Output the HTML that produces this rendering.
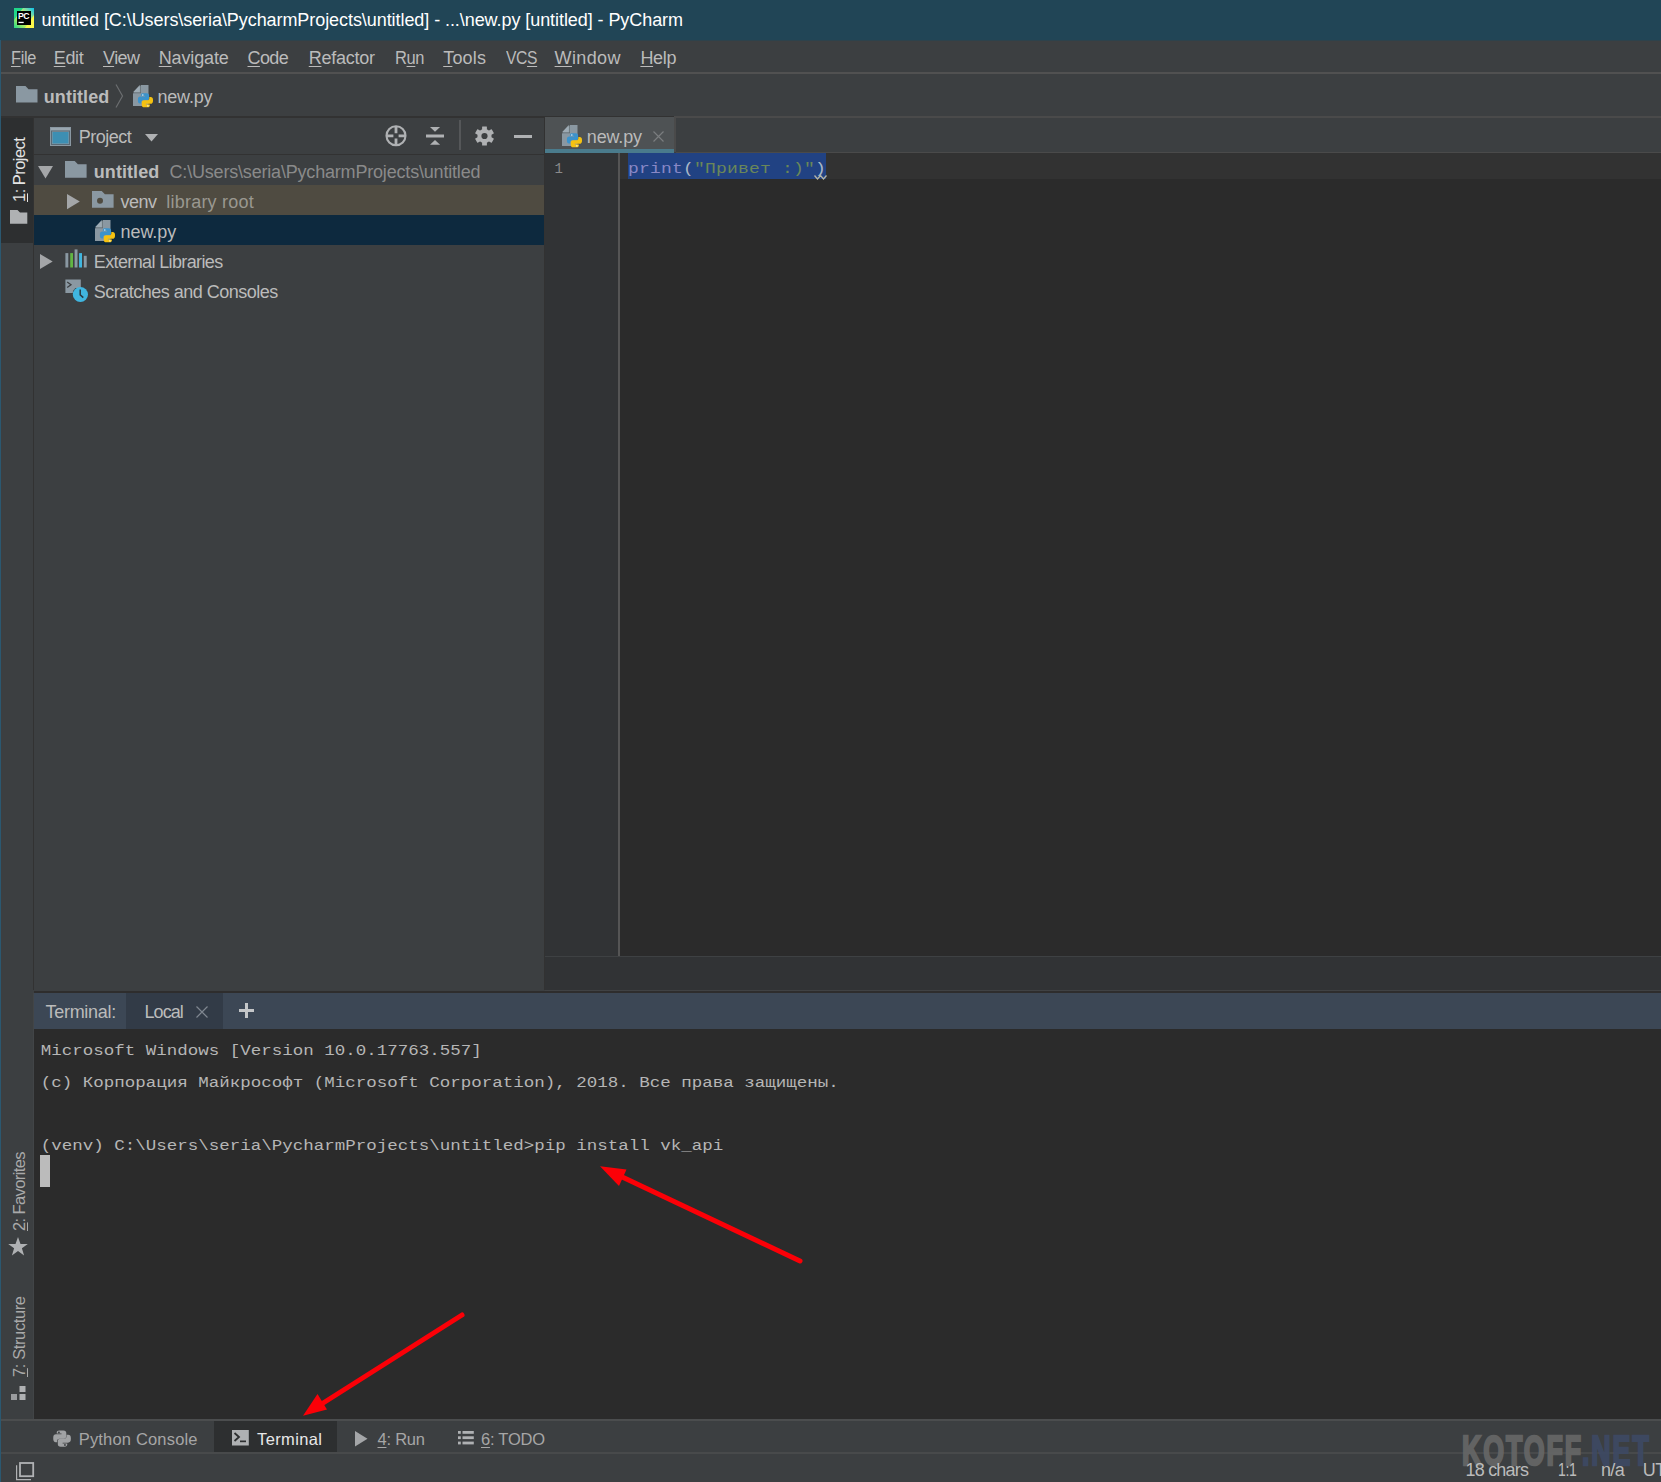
<!DOCTYPE html>
<html lang="en"><head><meta charset="utf-8"><title>untitled - PyCharm</title>
<style>
html,body{margin:0;padding:0}
body{width:1661px;height:1482px;position:relative;overflow:hidden;background:#3c3f41;font-family:"Liberation Sans",sans-serif;}
.b{position:absolute}
.t{position:absolute;white-space:pre;line-height:1;transform-origin:0 0;z-index:2}
.t u{text-decoration:underline;text-decoration-thickness:1px;text-underline-offset:2px}
.m{font-family:"Liberation Mono",monospace}
svg{position:absolute;overflow:visible}
</style></head>
<body>
<div class="b" style="left:0px;top:0px;width:1661px;height:40px;background:#214556"></div>
<div class="b" style="left:0px;top:40px;width:1661px;height:1px;background:#2e424b"></div>
<div class="b" style="left:0px;top:40px;width:1px;height:1442px;background:#2b5870"></div>
<div class="b" style="left:1px;top:72px;width:1660px;height:2px;background:#515151"></div>
<div class="b" style="left:1px;top:116px;width:544px;height:2px;background:#323232"></div>
<div class="b" style="left:674px;top:116px;width:987px;height:2px;background:#4a4a4a"></div>
<div class="b" style="left:1px;top:118px;width:32px;height:125px;background:#2d2f30"></div>
<div class="b" style="left:33px;top:118px;width:1px;height:872px;background:#323232"></div>
<div class="b" style="left:33px;top:993px;width:1px;height:426px;background:#424547"></div>
<div class="b" style="left:34px;top:154px;width:510px;height:1px;background:#323232"></div>
<div class="b" style="left:34px;top:185px;width:510px;height:30px;background:#4f4b41"></div>
<div class="b" style="left:34px;top:215px;width:510px;height:30px;background:#0d293e"></div>
<div class="b" style="left:544px;top:118px;width:1px;height:872px;background:#323232"></div>
<div class="b" style="left:545px;top:117px;width:129px;height:36px;background:#4e5254"></div>
<div class="b" style="left:545px;top:116px;width:129px;height:1px;background:#323232"></div>
<div class="b" style="left:545px;top:149px;width:129px;height:4px;background:#4a7b8c"></div>
<div class="b" style="left:674px;top:118px;width:2px;height:34px;background:#4a4a4a"></div>
<div class="b" style="left:676px;top:152px;width:985px;height:1px;background:#4a4a4a"></div>
<div class="b" style="left:545px;top:153px;width:73px;height:803px;background:#313335"></div>
<div class="b" style="left:618px;top:153px;width:2px;height:803px;background:#555555"></div>
<div class="b" style="left:620px;top:153px;width:1041px;height:803px;background:#2b2b2b"></div>
<div class="b" style="left:620px;top:153px;width:1041px;height:26px;background:#323232"></div>
<div class="b" style="left:628px;top:153px;width:198px;height:26px;background:#214283"></div>
<div class="b" style="left:545px;top:956px;width:1116px;height:34px;background:#313335"></div>
<div class="b" style="left:545px;top:956px;width:1116px;height:1px;background:#3e4143"></div>
<div class="b" style="left:545px;top:990px;width:1116px;height:1px;background:#404244"></div>
<div class="b" style="left:34px;top:991px;width:1627px;height:2px;background:#2e2d2d"></div>
<div class="b" style="left:34px;top:993px;width:1627px;height:36px;background:#3c4755"></div>
<div class="b" style="left:126px;top:993px;width:97px;height:36px;background:#323b47"></div>
<div class="b" style="left:34px;top:1029px;width:1627px;height:390px;background:#2b2b2b"></div>
<div class="b" style="left:40px;top:1155px;width:10px;height:32px;background:#bbbbbb"></div>
<div class="b" style="left:1px;top:1419px;width:1660px;height:2px;background:#4b4d4e"></div>
<div class="b" style="left:214px;top:1421px;width:123px;height:31px;background:#2d2f30"></div>
<div class="b" style="left:1px;top:1452px;width:1660px;height:2px;background:#484a4b"></div>
<span class="t" style="left:41.50px;top:10.76px;font-size:18px;color:#ffffff;letter-spacing:-0.069px">untitled [C:\Users\seria\PycharmProjects\untitled] - ...\new.py [untitled] - PyCharm</span>
<span class="t" style="left:10.50px;top:48.76px;font-size:18px;color:#bbbbbb;letter-spacing:-0.400px;transform:scaleX(0.9078)"><u>F</u>ile</span>
<span class="t" style="left:53.75px;top:48.76px;font-size:18px;color:#bbbbbb;letter-spacing:-0.344px"><u>E</u>dit</span>
<span class="t" style="left:103.00px;top:48.76px;font-size:18px;color:#bbbbbb;letter-spacing:-0.568px"><u>V</u>iew</span>
<span class="t" style="left:158.75px;top:48.76px;font-size:18px;color:#bbbbbb;letter-spacing:-0.150px"><u>N</u>avigate</span>
<span class="t" style="left:247.50px;top:48.76px;font-size:18px;color:#bbbbbb;letter-spacing:-0.594px"><u>C</u>ode</span>
<span class="t" style="left:308.75px;top:48.76px;font-size:18px;color:#bbbbbb;letter-spacing:-0.254px"><u>R</u>efactor</span>
<span class="t" style="left:394.80px;top:48.76px;font-size:18px;color:#bbbbbb;letter-spacing:-0.400px;transform:scaleX(0.9153)">R<u>u</u>n</span>
<span class="t" style="left:443.20px;top:48.76px;font-size:18px;color:#bbbbbb;letter-spacing:0.192px"><u>T</u>ools</span>
<span class="t" style="left:505.50px;top:48.76px;font-size:18px;color:#bbbbbb;letter-spacing:-0.400px;transform:scaleX(0.8698)">VC<u>S</u></span>
<span class="t" style="left:554.60px;top:48.76px;font-size:18px;color:#bbbbbb;letter-spacing:0.374px"><u>W</u>indow</span>
<span class="t" style="left:640.40px;top:48.76px;font-size:18px;color:#bbbbbb;letter-spacing:-0.310px"><u>H</u>elp</span>
<span class="t" style="left:43.75px;top:87.76px;font-size:18px;color:#bbbbbb;letter-spacing:0.071px;font-weight:700">untitled</span>
<span class="t" style="left:157.50px;top:87.76px;font-size:18px;color:#bbbbbb;letter-spacing:-0.209px">new.py</span>
<span class="t" style="left:78.75px;top:127.76px;font-size:18px;color:#bbbbbb;letter-spacing:-0.505px">Project</span>
<span class="t" style="left:93.75px;top:162.76px;font-size:18px;color:#bbbbbb;letter-spacing:0.071px;font-weight:700">untitled</span>
<span class="t" style="left:169.50px;top:162.76px;font-size:18px;color:#8a8a8a;letter-spacing:-0.187px">C:\Users\seria\PycharmProjects\untitled</span>
<span class="t" style="left:120.50px;top:192.76px;font-size:18px;color:#bbbbbb;letter-spacing:-0.510px">venv</span>
<span class="t" style="left:166.25px;top:192.76px;font-size:18px;color:#9a9890;letter-spacing:0.224px">library root</span>
<span class="t" style="left:120.50px;top:222.76px;font-size:18px;color:#bbbbbb;letter-spacing:-0.059px">new.py</span>
<span class="t" style="left:93.75px;top:252.76px;font-size:18px;color:#bbbbbb;letter-spacing:-0.621px">External Libraries</span>
<span class="t" style="left:93.75px;top:282.76px;font-size:18px;color:#bbbbbb;letter-spacing:-0.505px">Scratches and Consoles</span>
<span class="t" style="left:586.80px;top:127.76px;font-size:18px;color:#bbbbbb;letter-spacing:-0.169px">new.py</span>
<span class="t m" style="left:554.50px;top:161.67px;font-size:14px;color:#8a8a8a;letter-spacing:0.000px">1</span>
<span class="t" style="left:45.50px;top:1002.76px;font-size:18px;color:#bbbbbb;letter-spacing:-0.285px">Terminal:</span>
<span class="t" style="left:144.50px;top:1002.76px;font-size:18px;color:#bbbbbb;letter-spacing:-0.945px">Local</span>
<span class="t" style="left:78.75px;top:1431.03px;font-size:16.5px;color:#a6a6a6;letter-spacing:0.173px">Python Console</span>
<span class="t" style="left:257.00px;top:1431.03px;font-size:16.5px;color:#e8e8e8;letter-spacing:0.377px">Terminal</span>
<span class="t" style="left:377.50px;top:1431.03px;font-size:16.5px;color:#a6a6a6;letter-spacing:-0.225px"><u>4</u>: Run</span>
<span class="t" style="left:481.00px;top:1431.03px;font-size:16.5px;color:#a6a6a6;letter-spacing:-0.237px"><u>6</u>: TODO</span>
<span class="t" style="left:1465.50px;top:1461.36px;font-size:18px;color:#bbbbbb;letter-spacing:-0.792px">18 chars</span>
<span class="t" style="left:1557.70px;top:1461.36px;font-size:18px;color:#bbbbbb;letter-spacing:-0.400px;transform:scaleX(0.7800)">1:1</span>
<span class="t" style="left:1601.00px;top:1461.36px;font-size:18px;color:#bbbbbb;letter-spacing:-0.666px">n/a</span>
<span class="t" style="left:1642.80px;top:1461.36px;font-size:18px;color:#bbbbbb;letter-spacing:-0.600px">UTF-8</span>
<span class="t" style="left:11.33px;top:201.60px;font-size:16.5px;color:#e4e4e4;letter-spacing:-0.545px;transform:rotate(-90deg)"><u>1</u>: Project</span>
<span class="t" style="left:11.33px;top:1230.60px;font-size:16.5px;color:#a9a9a9;letter-spacing:-0.600px;transform:rotate(-90deg)"><u>2</u>: Favorites</span>
<span class="t" style="left:11.33px;top:1377.40px;font-size:16.5px;color:#a9a9a9;letter-spacing:-0.391px;transform:rotate(-90deg)"><u>7</u>: Structure</span>
<!-- code line -->
<span class="t m" style="left:628px;top:158.7px;font-size:18px;letter-spacing:0.2px;color:#a9b7c6;transform:scaleY(.85);transform-origin:0 13.800px"><span style="color:#8888c6">print</span>(<span style="color:#6a8759">"Привет :)"</span>)</span>
<svg style="left:814px;top:173.500px" width="13" height="6" viewBox="0 0 13 6"><path d="M0.5 1.5 L3.5 5 L6.5 1.5 L9.5 5 L12.5 1.5" fill="none" stroke="#b4b4a6" stroke-width="1.300"/></svg>
<!-- terminal text -->
<span class="t m" style="left:40.700px;top:1041.6px;font-size:17.5px;color:#b6b6b6;transform:scaleY(.85);transform-origin:0 13.400px">Microsoft Windows [Version 10.0.17763.557]</span>
<span class="t m" style="left:40.700px;top:1073.6px;font-size:17.5px;color:#b6b6b6;transform:scaleY(.85);transform-origin:0 13.400px">(c) Корпорация Майкрософт (Microsoft Corporation), 2018. Все права защищены.</span>
<span class="t m" style="left:40.700px;top:1136.9px;font-size:17.5px;color:#b6b6b6;transform:scaleY(.85);transform-origin:0 13.400px">(venv) C:\Users\seria\PycharmProjects\untitled&gt;pip install vk_api</span>

<!-- PyCharm logo -->
<svg style="left:14px;top:8px" width="20" height="20" viewBox="0 0 20 20">
<defs><linearGradient id="pcg" x1="0" y1="1" x2="1" y2="0"><stop offset="0" stop-color="#21d789"/><stop offset="0.5" stop-color="#fcf84a"/><stop offset="1" stop-color="#07c3f2"/></linearGradient></defs>
<rect width="20" height="20" fill="url(#pcg)"/><path d="M0 0H9L0 12Z" fill="#21d789"/><path d="M20 20H11L20 7Z" fill="#fcf84a"/>
<rect x="3" y="3" width="14" height="14" fill="#000"/>
<text x="4" y="11.300" font-family="Liberation Sans, sans-serif" font-weight="700" font-size="9.200" fill="#fff" letter-spacing="-0.6" textLength="11" lengthAdjust="spacingAndGlyphs">PC</text>
<rect x="4.500" y="13.800" width="5.200" height="1.300" fill="#fff"/>
</svg>

<!-- breadcrumb folder -->
<svg style="left:16px;top:86px" width="22" height="17" viewBox="0 0 22 17"><path d="M0 0H9.5L12.5 3.2H21.5V16.5H0Z" fill="#8a98a2"/></svg>
<!-- breadcrumb chevron -->
<svg style="left:115px;top:84px" width="9" height="24" viewBox="0 0 9 24"><path d="M1 0.5L7.5 12L1 23.5" fill="none" stroke="#6b6e70" stroke-width="1.2"/></svg>
<!-- py file icon (breadcrumb) -->
<svg style="left:133px;top:84.5px" width="21" height="23" viewBox="0 0 21 23"><path d="M8 0H15.5V21H0V8.3Z" fill="#8a98a2"/><path d="M6.8 0V7.2H0Z" fill="#9eabb4"/><path d="M7.4 0H8V8.3H0V7.6H7.4Z" fill="#3c3f41" opacity=".55"/><g transform="translate(4.900,8.300) scale(1.056,1.066) translate(-4.400,-8.200)"><path d="M9.3 8.2h3.4c1.5 0 2.3.8 2.3 2.2v2.4c0 1.2-.9 2-2 2H9.6c-1.3 0-2 .7-2 1.9v1.1H6.4c-1.3 0-2-1-2-2.6v-1.3c0-1.700.9-2.600 2.200-2.600h4.500v-.7H7.200v-.5c0-1.300.8-1.900 2.100-1.900z" fill="#3b93cc"/><circle cx="9" cy="9.800" r=".75" fill="#d8ecf7"/><path d="M15.200 11.600h1.300c1.400 0 2.200 1 2.200 2.600v1.200c0 1.700-1 2.700-2.300 2.700h-4.400v.7h3.800v.600c0 1.200-.8 1.900-2.100 1.900h-3.300c-1.500 0-2.300-.8-2.300-2.200v-2.400c0-1.200.9-2 2-2h3.100c1.300 0 2-.7 2-1.900z" fill="#f5c211"/><circle cx="13.900" cy="20" r=".75" fill="#fdf0b8"/></g></svg>

<!-- project header icon -->
<svg style="left:49.5px;top:127px" width="21" height="19" viewBox="0 0 21 19"><rect width="21" height="19" fill="#8a98a2"/><rect x="1" y="1" width="19" height="2.500" fill="#9aa7b0"/><rect x="2.500" y="5" width="16" height="11.500" fill="#3d8fb3"/><rect x="1.500" y="4" width="18" height="13.500" fill="none" stroke="#596a76" stroke-width="1"/></svg>
<svg style="left:144.5px;top:133.5px" width="13" height="8" viewBox="0 0 13 8"><path d="M0 0H13L6.500 7.500Z" fill="#afb1b3"/></svg>
<!-- crosshair -->
<svg style="left:385px;top:125px" width="22" height="22" viewBox="0 0 22 22"><circle cx="11" cy="10.800" r="9.500" fill="none" stroke="#afb1b3" stroke-width="2.100"/><path d="M11 1.500V8.200M11 13.400V20.200M1.500 10.800H8.400M13.600 10.800H20.500" stroke="#afb1b3" stroke-width="2.800" fill="none"/></svg>
<!-- collapse -->
<svg style="left:426px;top:127px" width="18" height="18" viewBox="0 0 18 18"><path d="M0 7.500H18V10.500H0Z" fill="#afb1b3"/><path d="M4 0H14.100L9 4.800Z" fill="#afb1b3"/><path d="M4 17.800H14.100L9 13Z" fill="#afb1b3"/></svg>
<div class="b" style="left:459px;top:120px;width:1.600px;height:30px;background:#555759"></div>
<!-- gear -->
<svg style="left:474.500px;top:126px" width="19" height="20" viewBox="-9.500 -10 19 20"><g fill="#afb1b3"><rect x="-2.400" y="-9.600" width="4.800" height="19.200" rx=".4"/><rect x="-2.400" y="-9.600" width="4.800" height="19.200" rx=".4" transform="rotate(60)"/><rect x="-2.400" y="-9.600" width="4.800" height="19.200" rx=".4" transform="rotate(120)"/><circle r="7.100"/></g><circle r="3.100" fill="#3c3f41"/></svg>
<div class="b" style="left:514px;top:134.500px;width:18px;height:3px;background:#afb1b3"></div>

<!-- tree row 1 -->
<svg style="left:38px;top:166px" width="15" height="13" viewBox="0 0 15 13"><path d="M0 0H15L7.500 12.500Z" fill="#a4a6a8"/></svg>
<svg style="left:65px;top:160.800px" width="22" height="17" viewBox="0 0 22 17"><path d="M0 0H9.700L12.900 3.200H21.600V16.700H0Z" fill="#8a98a2"/></svg>
<!-- venv row -->
<svg style="left:66.700px;top:193.700px" width="13" height="16" viewBox="0 0 13 16"><path d="M0 0L12.800 7.600L0 15.200Z" fill="#a4a6a8"/></svg>
<svg style="left:92px;top:190.800px" width="22" height="17" viewBox="0 0 22 17"><path d="M0 0H9.700L12.900 3.200H21.600V16.700H0Z" fill="#8a98a2"/><circle cx="8" cy="9.700" r="3" fill="#4f4b41"/></svg>
<!-- new.py row -->
<svg style="left:95.300px;top:219.500px" width="21" height="23" viewBox="0 0 21 23"><path d="M8 0H15.5V21H0V8.3Z" fill="#8a98a2"/><path d="M6.8 0V7.2H0Z" fill="#9eabb4"/><path d="M7.4 0H8V8.3H0V7.6H7.4Z" fill="#3c3f41" opacity=".55"/><g transform="translate(4.900,8.300) scale(1.056,1.066) translate(-4.400,-8.200)"><path d="M9.3 8.2h3.4c1.5 0 2.3.8 2.3 2.2v2.4c0 1.2-.9 2-2 2H9.6c-1.3 0-2 .7-2 1.9v1.1H6.4c-1.3 0-2-1-2-2.6v-1.3c0-1.700.9-2.600 2.200-2.600h4.500v-.7H7.200v-.5c0-1.300.8-1.900 2.100-1.900z" fill="#3b93cc"/><circle cx="9" cy="9.800" r=".75" fill="#d8ecf7"/><path d="M15.200 11.600h1.300c1.400 0 2.200 1 2.200 2.600v1.200c0 1.700-1 2.700-2.300 2.700h-4.400v.7h3.800v.600c0 1.200-.8 1.900-2.100 1.900h-3.300c-1.500 0-2.300-.8-2.300-2.200v-2.400c0-1.200.9-2 2-2h3.100c1.300 0 2-.7 2-1.900z" fill="#f5c211"/><circle cx="13.900" cy="20" r=".75" fill="#fdf0b8"/></g></svg>
<!-- External Libraries -->
<svg style="left:39.700px;top:253.900px" width="13" height="16" viewBox="0 0 13 16"><path d="M0 0L12.700 7.450L0 14.900Z" fill="#a4a6a8"/></svg>
<svg style="left:65px;top:249px" width="22" height="19" viewBox="0 0 22 19"><rect x=".400" y="4.100" width="2.900" height="14.400" fill="#8a98a2"/><rect x="5.200" y="4.100" width="2.800" height="14.400" fill="#62b543"/><rect x="9.600" y=".400" width="2.900" height="18.100" fill="#8a98a2"/><rect x="14.100" y="4.100" width="2.900" height="14.400" fill="#40b6e0"/><rect x="18.800" y="6.800" width="2.900" height="11.700" fill="#8a98a2"/></svg>
<!-- Scratches -->
<svg style="left:65px;top:279px" width="24" height="24" viewBox="0 0 24 24"><path d="M.400 .400H15.800V9H10.500C8.500 10.500 7.800 12.300 7.800 14H.400Z" fill="#8a98a2"/><path d="M2.200 3L6 5.800L2.200 8.600" fill="none" stroke="#3c3f41" stroke-width="1.300"/><circle cx="15.400" cy="15.500" r="7.600" fill="#40b6e0"/><path d="M15.200 10.500V15.800L18.300 18.600" fill="none" stroke="#2b3a42" stroke-width="1.500"/></svg>

<!-- editor tab -->
<svg style="left:562px;top:124.700px" width="21" height="23" viewBox="0 0 21 23"><path d="M8 0H15.5V21H0V8.3Z" fill="#8a98a2"/><path d="M6.8 0V7.2H0Z" fill="#9eabb4"/><path d="M7.4 0H8V8.3H0V7.6H7.4Z" fill="#3c3f41" opacity=".55"/><g transform="translate(4.900,8.300) scale(1.056,1.066) translate(-4.400,-8.200)"><path d="M9.3 8.2h3.4c1.5 0 2.3.8 2.3 2.2v2.4c0 1.2-.9 2-2 2H9.6c-1.3 0-2 .7-2 1.9v1.1H6.4c-1.3 0-2-1-2-2.6v-1.3c0-1.700.9-2.600 2.200-2.600h4.500v-.7H7.200v-.5c0-1.300.8-1.900 2.100-1.900z" fill="#3b93cc"/><circle cx="9" cy="9.800" r=".75" fill="#d8ecf7"/><path d="M15.200 11.600h1.300c1.400 0 2.200 1 2.200 2.600v1.200c0 1.700-1 2.700-2.300 2.700h-4.400v.7h3.800v.600c0 1.200-.8 1.900-2.100 1.900h-3.300c-1.500 0-2.300-.8-2.300-2.200v-2.400c0-1.200.9-2 2-2h3.100c1.300 0 2-.7 2-1.900z" fill="#f5c211"/><circle cx="13.900" cy="20" r=".75" fill="#fdf0b8"/></g></svg>
<svg style="left:652.500px;top:131px" width="11" height="11" viewBox="0 0 11 11"><path d="M.500 .500L10.500 10.500M10.500 .500L.500 10.500" stroke="#7a7d7f" stroke-width="1.200" fill="none"/></svg>

<!-- terminal header -->
<svg style="left:195.500px;top:1006px" width="12" height="12" viewBox="0 0 12 12"><path d="M.500 .500L11.500 11.500M11.500 .500L.500 11.500" stroke="#7f8790" stroke-width="1.200" fill="none"/></svg>
<svg style="left:238.500px;top:1002.500px" width="15" height="15" viewBox="0 0 15 15"><path d="M7.500 0V15M0 7.500H15" stroke="#c4c6c8" stroke-width="3" fill="none"/></svg>

<!-- left stripe icons -->
<svg style="left:9.600px;top:210.200px" width="18" height="14" viewBox="0 0 18 14"><path d="M0 0H7.500L10 2.600H17.300V13.700H0Z" fill="#afb1b3"/></svg>
<svg style="left:8px;top:1236.500px" width="20" height="19" viewBox="0 0 20 19"><path d="M10 0L12.500 7H19.800L13.900 11.300L16.100 18.500L10 14.100L3.900 18.500L6.100 11.300L.200 7H7.500Z" fill="#afb1b3"/></svg>
<svg style="left:11px;top:1386px" width="15" height="15" viewBox="0 0 15 15"><rect x="8.500" y="0" width="6" height="6" fill="#afb1b3"/><rect x="0" y="8" width="6" height="6" fill="#9a9c9e"/><rect x="8.500" y="8" width="6" height="6" fill="#afb1b3"/></svg>

<!-- bottom bar icons -->
<svg style="left:53px;top:1430px" width="18" height="18" viewBox="4.200 8 14.600 14.200"><path d="M9.300 8.200h3.400c1.500 0 2.300.8 2.300 2.200v2.400c0 1.200-.9 2-2 2H9.600c-1.300 0-2 .7-2 1.900v1.100H6.400c-1.300 0-2-1-2-2.600v-1.300c0-1.700.9-2.600 2.200-2.600h4.500v-.7H7.200v-.5c0-1.300.8-1.900 2.100-1.900z" fill="#a0a2a4"/><circle cx="9" cy="9.800" r=".75" fill="#3c3f41"/><path d="M15.200 11.600h1.300c1.400 0 2.200 1 2.200 2.600v1.200c0 1.700-1 2.700-2.300 2.700h-4.400v.7h3.800v.6c0 1.200-.8 1.900-2.100 1.900h-3.300c-1.500 0-2.300-.8-2.300-2.200v-2.400c0-1.200.9-2 2-2h3.100c1.300 0 2-.7 2-1.900z" fill="#a0a2a4"/><circle cx="13.900" cy="20" r=".75" fill="#3c3f41"/></svg>
<svg style="left:232px;top:1430px" width="17" height="16" viewBox="0 0 17 16"><rect width="16.800" height="15.500" fill="#afb1b3"/><path d="M2.500 3L7 7L2.500 11" fill="none" stroke="#2d2f30" stroke-width="1.800"/><rect x="8" y="10.500" width="6" height="1.700" fill="#2d2f30"/></svg>
<svg style="left:354.500px;top:1430.500px" width="13" height="16" viewBox="0 0 13 16"><path d="M0 0L12.500 7.750L0 15.500Z" fill="#a4a6a8"/></svg>
<svg style="left:458px;top:1431px" width="16" height="14" viewBox="0 0 16 14"><g fill="#afb1b3"><rect x="0" y="0" width="2.800" height="2.800"/><rect x="4.500" y="0" width="11.300" height="2.800"/><rect x="0" y="5.300" width="2.800" height="2.800"/><rect x="4.500" y="5.300" width="11.300" height="2.800"/><rect x="0" y="10.600" width="2.800" height="2.800"/><rect x="4.500" y="10.600" width="11.300" height="2.800"/></g></svg>
<svg style="left:16px;top:1462px" width="19" height="19" viewBox="0 0 19 19"><rect x="4" y="1" width="13.200" height="13.200" fill="none" stroke="#b0b2b4" stroke-width="1.800"/><path d="M.600 3.200V17.600H15" fill="none" stroke="#b0b2b4" stroke-width="1.200"/></svg>

<!-- watermark -->
<span class="t" style="left:1461.500px;top:1429.500px;z-index:1;font-size:42px;font-weight:700;color:#676767;-webkit-text-stroke:2.600px #676767;opacity:.9;transform:scaleX(.638);letter-spacing:3px">KOTOFF</span>
<span class="t" style="left:1582px;top:1429.500px;z-index:1;font-size:42px;font-weight:700;color:#3e4964;-webkit-text-stroke:2.600px #3e4964;opacity:.9;transform:scaleX(.638);letter-spacing:3px">.NET</span>

<!-- red arrows -->
<svg style="left:0;top:0" width="1661" height="1482" viewBox="0 0 1661 1482"><g stroke="#fb0007" stroke-width="5" stroke-linecap="round" fill="#fb0007">
<line x1="800" y1="1261" x2="618" y2="1175"/><path d="M600 1166.300L626.500 1169.500L619 1186Z" stroke="none"/>
<line x1="462" y1="1315" x2="320" y2="1405"/><path d="M303 1415.800L317.500 1394L327 1409.500Z" stroke="none"/>
</g></svg>
</body></html>
